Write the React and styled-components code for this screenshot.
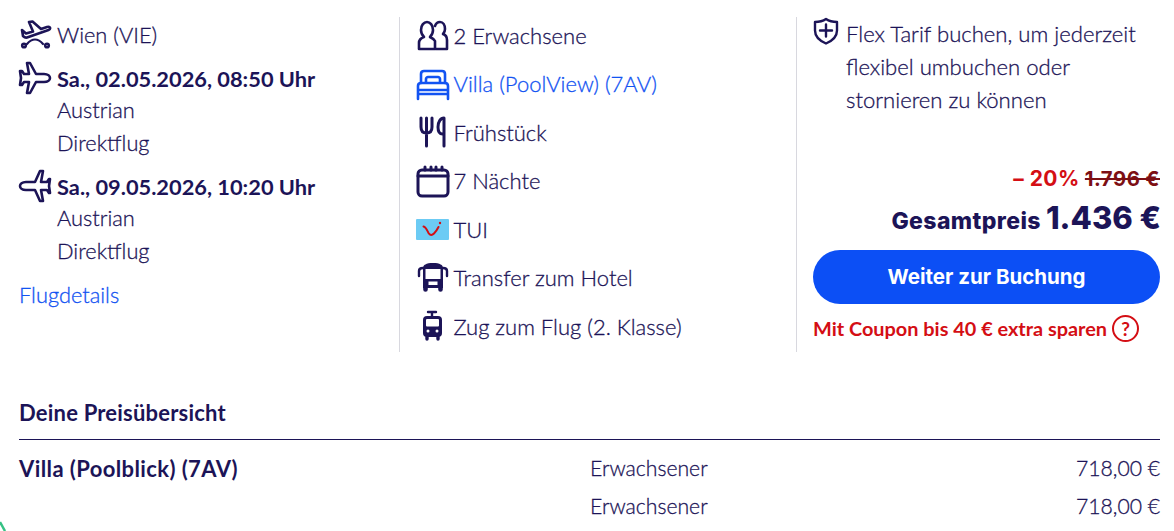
import styled, { createGlobalStyle } from "styled-components";

const navy = "#1c1457";
const blue = "#1253f2";
const red = "#d40e14";

const GlobalStyle = createGlobalStyle`
  html, body {
    margin: 0;
    padding: 0;
    background: #fff;
    overflow: hidden;
  }
  body {
    font-family: "Lato", "Open Sans", sans-serif;
    color: ${navy};
  }
`;

const Stroke = ({ children, color = navy, width = 2.6 }) => (
  <svg width="34" height="34" viewBox="0 0 34 34" fill="none" stroke={color} strokeWidth={width} strokeLinecap="round" strokeLinejoin="round">
    {children}
  </svg>
);

const DepartIcon = () => (
  <Stroke>
    <path d="M4 12l4 3.500 7-2L11 4l3.500-.500L23 11l6-2c3.500-1 4 2 1.500 3L9 19.500c-2 .500-3-.500-4-1.500z" />
    <path d="M9 26c2.500-3 5-4.500 8-4.500s5.500 1.500 8 4.500" strokeWidth="2.200" />
    <circle cx="6" cy="27.500" r="1.800" />
    <circle cx="29" cy="27.500" r="1.800" />
  </Stroke>
);

const OutboundIcon = () => (
  <Stroke>
    <path d="M9 2h3l6 11h8c4 0 6 2 6 4s-2 4-6 4h-8l-6 11H9l2-11H6l-2 3H2l1-7-1-7h2l2 3h5z" />
  </Stroke>
);

const ReturnIcon = () => (
  <Stroke>
    <path d="M25 2h-3l-5 11H8c-4 0-6 2-6 4s2 4 6 4h9l5 11h3l-2-11h6l2 3h1l-1-7 1-7h-1l-2 3h-6z" />
  </Stroke>
);

const PeopleIcon = () => (
  <Stroke>
    <path d="M3 31v-6c0-3 2-5 5-6-2-2-3-4-3-7 0-5 3-8 6-8s6 3 6 8c0 3-1 5-3 7 2 1 4 2 5 4v8z" />
    <path d="M19 8c1-3 3-4 5-4 3 0 5 3 5 7 0 2-1 4-2 5 3 1 4 3 4 6v9H20" />
  </Stroke>
);

const BedIcon = () => (
  <Stroke color={blue}>
    <path d="M5 16V7c0-2 1-3 3-3h18c2 0 3 1 3 3v9" />
    <path d="M10 15v-3c0-1 1-2 2-2h10c1 0 2 1 2 2v3" />
    <path d="M5 16h24c2 0 3 1 3 3v8H2v-8c0-2 1-3 3-3zM2 23h30M2 27v5M32 27v5" />
  </Stroke>
);

const MealIcon = () => (
  <Stroke width={3}>
    <path d="M5 3v9c0 4 2 6 5.500 6s5.500-2 5.500-6V3M10.500 3v28" />
    <path d="M28 19h-1.500c-3 0-4.500-2-4.500-7 0-5 2.500-9 6-9v28" />
  </Stroke>
);

const CalendarIcon = () => (
  <Stroke width={3}>
    <rect x="2" y="6" width="30" height="26" rx="4" />
    <path d="M2 12h30" />
    <path d="M9 3v3M15 3v3M20 3v3M26 3v3" />
  </Stroke>
);

const TuiLogo = () => (
  <svg width="33" height="21" viewBox="0 0 33 21">
    <rect width="33" height="21" rx="1" fill="#6ccbf4" />
    <path d="M7.500 7.500C10 8 11 11 12.500 14c1.500 2.500 3.500 2.500 5.500.500 2-2 3.500-4.500 4.500-6.500" fill="none" stroke={red} strokeWidth="2" strokeLinecap="round" />
    <circle cx="24" cy="4" r="1.200" fill={red} />
  </svg>
);

const BusIcon = () => (
  <svg width="34" height="34" viewBox="0 0 34 34" fill="none">
    <path d="M7 7c0-3 3-5 10-5s10 2 10 5v20H7z" fill={navy} />
    <rect x="9.500" y="8" width="15" height="10" fill="#fff" />
    <rect x="12.500" y="20.500" width="9" height="3.500" fill="#fff" />
    <path d="M3 15v-5c0-2 1.500-3 4-3M31 15v-5c0-2-1.500-3-4-3" stroke={navy} strokeWidth="2.400" strokeLinecap="round" />
    <path d="M9.500 26v2.500M24.500 26v2.500" stroke={navy} strokeWidth="4.600" strokeLinecap="round" />
  </svg>
);

const TrainIcon = () => (
  <svg width="34" height="34" viewBox="0 0 34 34" fill="none">
    <path d="M12 2h8M16 2v5" stroke={navy} strokeWidth="2.400" strokeLinecap="round" />
    <rect x="7" y="6" width="19" height="21" rx="4" fill={navy} />
    <rect x="10" y="9" width="13" height="7.500" rx="1" fill="#fff" />
    <circle cx="12" cy="21" r="1.500" fill="#fff" />
    <circle cx="21" cy="21" r="1.500" fill="#fff" />
    <path d="M11 27v2M22 27v2" stroke={navy} strokeWidth="3.400" strokeLinecap="round" />
  </svg>
);

const ShieldIcon = () => (
  <svg width="26" height="28" viewBox="0 0 26 28" fill="none" stroke={navy} strokeWidth="2.400" strokeLinecap="round" strokeLinejoin="round">
    <path d="M13 2c3 2 7 3 11 3v8.500c0 6-4 10-11 13-7-3-11-7-11-13V5c4 0 8-1 11-3z" />
    <path d="M13 7.500v12M7 13.500h12" />
  </svg>
);

const Page = styled.main`
  position: relative;
  width: 1174px;
  height: 531px;
  box-sizing: border-box;
  padding: 17px 14px 0 19px;
  overflow: hidden;
`;

const Columns = styled.div`
  display: grid;
  grid-template-columns: 380px 397px 1fr;
  height: 335px;
`;

const Column = styled.section`
  display: flex;
  flex-direction: column;
  border-left: ${(p) => (p.$divided ? "1px solid #d8d8df" : "none")};
  padding-left: ${(p) => (p.$divided ? "16px" : "0")};
`;

const Copy = styled.div`
  font-weight: 300;
  -webkit-text-stroke: 0.3px currentColor;
`;

const FlightRow = styled.div`
  display: grid;
  grid-template-columns: 38px 1fr;
  grid-template-rows: minmax(0, 1fr);
  align-items: center;
  height: ${(p) => (p.$bold ? 29 : 33)}px;
  margin-top: ${(p) => p.$top || 0}px;
  font-size: 21.800px;
  font-weight: ${(p) => (p.$bold ? 700 : 300)};
  -webkit-text-stroke: ${(p) => (p.$bold ? "0" : "0.3px currentColor")};
  white-space: nowrap;

  svg {
    margin-left: -1px;
  }
`;

const FlightDetail = styled(Copy)`
  padding-left: 38px;
  font-size: 21.800px;
  line-height: 33px;
`;

const LinkRow = styled(Copy)`
  margin-top: 11px;
`;

const TextLink = styled.a`
  color: ${blue};
  font-size: 21.800px;
  line-height: 33px;
`;

const Feature = styled(Copy)`
  display: grid;
  grid-template-columns: 37.500px 1fr;
  align-items: center;
  height: 36px;
  margin-bottom: 12.600px;
  font-size: 22px;
  color: ${(p) => (p.$link ? blue : navy)};
  white-space: nowrap;

  &:last-child {
    margin-bottom: 0;
  }
`;

const FlexOffer = styled(Copy)`
  display: grid;
  grid-template-columns: 33px 1fr;
  font-size: 22.100px;
  line-height: 33px;
`;

const Pricing = styled.div`
  display: flex;
  flex-direction: column;
  align-items: flex-end;
  margin-top: auto;
  margin-bottom: 10.500px;
  font-family: "Inter", sans-serif;
`;

const DiscountRow = styled.div`
  display: flex;
  align-items: baseline;
  gap: 5px;
  font-size: 21px;
  font-weight: 700;
  letter-spacing: 0.5px;
  color: ${red};
`;

const OldPrice = styled.s`
  color: #7d0f14;
  font-size: 20.300px;
`;

const TotalRow = styled.div`
  display: flex;
  align-items: baseline;
  gap: 5px;
  margin-top: 8px;
  font-size: 23px;
  font-weight: 800;
  letter-spacing: 0.4px;
`;

const TotalPrice = styled.span`
  margin-right: -1px;
  font-size: 31px;
  letter-spacing: 0;
`;

const BookButton = styled.button`
  width: 100%;
  height: 54px;
  margin-top: 14px;
  border: none;
  border-radius: 27px;
  background: #0c4ff5;
  color: #fff;
  font-family: "Inter", sans-serif;
  font-size: 20.500px;
  font-weight: 700;
`;

const Coupon = styled.div`
  display: flex;
  align-items: center;
  align-self: flex-start;
  gap: 5px;
  height: 27px;
  margin-top: 11px;
  font-family: "Lato", sans-serif;
  font-size: 19.900px;
  font-weight: 700;
  color: ${red};
`;

const HelpBadge = styled.span`
  display: flex;
  align-items: center;
  justify-content: center;
  width: 27px;
  height: 27px;
  box-sizing: border-box;
  border: 2px solid ${red};
  border-radius: 50%;
  font-size: 19px;
`;

const Overview = styled.section`
  margin-top: 47px;
`;

const OverviewTitle = styled.h2`
  margin: 0 0 9px;
  padding-bottom: 12px;
  border-bottom: 1px solid ${navy};
  font-size: 22px;
  font-weight: 700;
  line-height: 28px;
  letter-spacing: 0.2px;
`;

const PriceRow = styled(Copy)`
  display: grid;
  grid-template-columns: 571px 1fr auto;
  align-items: center;
  height: 38px;
  font-size: 21.200px;
`;

const RoomName = styled.strong`
  font-size: 22px;
  font-weight: 700;
  letter-spacing: 0.4px;
  -webkit-text-stroke: 0;
`;

const CornerMark = styled.svg`
  position: absolute;
  left: 0;
  bottom: 0;
`;

const features = [
  { icon: <PeopleIcon />, label: "2 Erwachsene" },
  { icon: <BedIcon />, label: "Villa (PoolView) (7AV)", link: true },
  { icon: <MealIcon />, label: "Frühstück" },
  { icon: <CalendarIcon />, label: "7 Nächte" },
  { icon: <TuiLogo />, label: "TUI" },
  { icon: <BusIcon />, label: "Transfer zum Hotel" },
  { icon: <TrainIcon />, label: "Zug zum Flug (2. Klasse)" },
];

export default function App() {
  return (
    <Page>
      <GlobalStyle />
      <Columns>
        <Column>
          <FlightRow $top={1}>
            <DepartIcon />
            <span>Wien (VIE)</span>
          </FlightRow>
          <FlightRow $bold $top={12.5}>
            <OutboundIcon />
            <span>Sa., 02.05.2026, 08:50 Uhr</span>
          </FlightRow>
          <FlightDetail>Austrian</FlightDetail>
          <FlightDetail>Direktflug</FlightDetail>
          <FlightRow $bold $top={13}>
            <ReturnIcon />
            <span>Sa., 09.05.2026, 10:20 Uhr</span>
          </FlightRow>
          <FlightDetail>Austrian</FlightDetail>
          <FlightDetail>Direktflug</FlightDetail>
          <LinkRow>
            <TextLink>Flugdetails</TextLink>
          </LinkRow>
        </Column>
        <Column $divided>
          {features.map((f) => (
            <Feature key={f.label} $link={f.link}>
              {f.icon}
              <span>{f.label}</span>
            </Feature>
          ))}
        </Column>
        <Column $divided>
          <FlexOffer>
            <ShieldIcon />
            <span>
              Flex Tarif buchen, um jederzeit
              <br />
              flexibel umbuchen oder
              <br />
              stornieren zu können
            </span>
          </FlexOffer>
          <Pricing>
            <DiscountRow>
              <span>– 20%</span>
              <OldPrice>1.796 €</OldPrice>
            </DiscountRow>
            <TotalRow>
              <span>Gesamtpreis</span>
              <TotalPrice>1.436 €</TotalPrice>
            </TotalRow>
            <BookButton>Weiter zur Buchung</BookButton>
            <Coupon>
              Mit Coupon bis 40 € extra sparen
              <HelpBadge>?</HelpBadge>
            </Coupon>
          </Pricing>
        </Column>
      </Columns>
      <Overview>
        <OverviewTitle>Deine Preisübersicht</OverviewTitle>
        <PriceRow>
          <RoomName>Villa (Poolblick) (7AV)</RoomName>
          <span>Erwachsener</span>
          <span>718,00 €</span>
        </PriceRow>
        <PriceRow>
          <span />
          <span>Erwachsener</span>
          <span>718,00 €</span>
        </PriceRow>
      </Overview>
      <CornerMark width="8" height="10" viewBox="0 0 8 10">
        <path d="M0 1l5 9" stroke="#35c184" strokeWidth="2.500" fill="none" />
      </CornerMark>
    </Page>
  );
}
